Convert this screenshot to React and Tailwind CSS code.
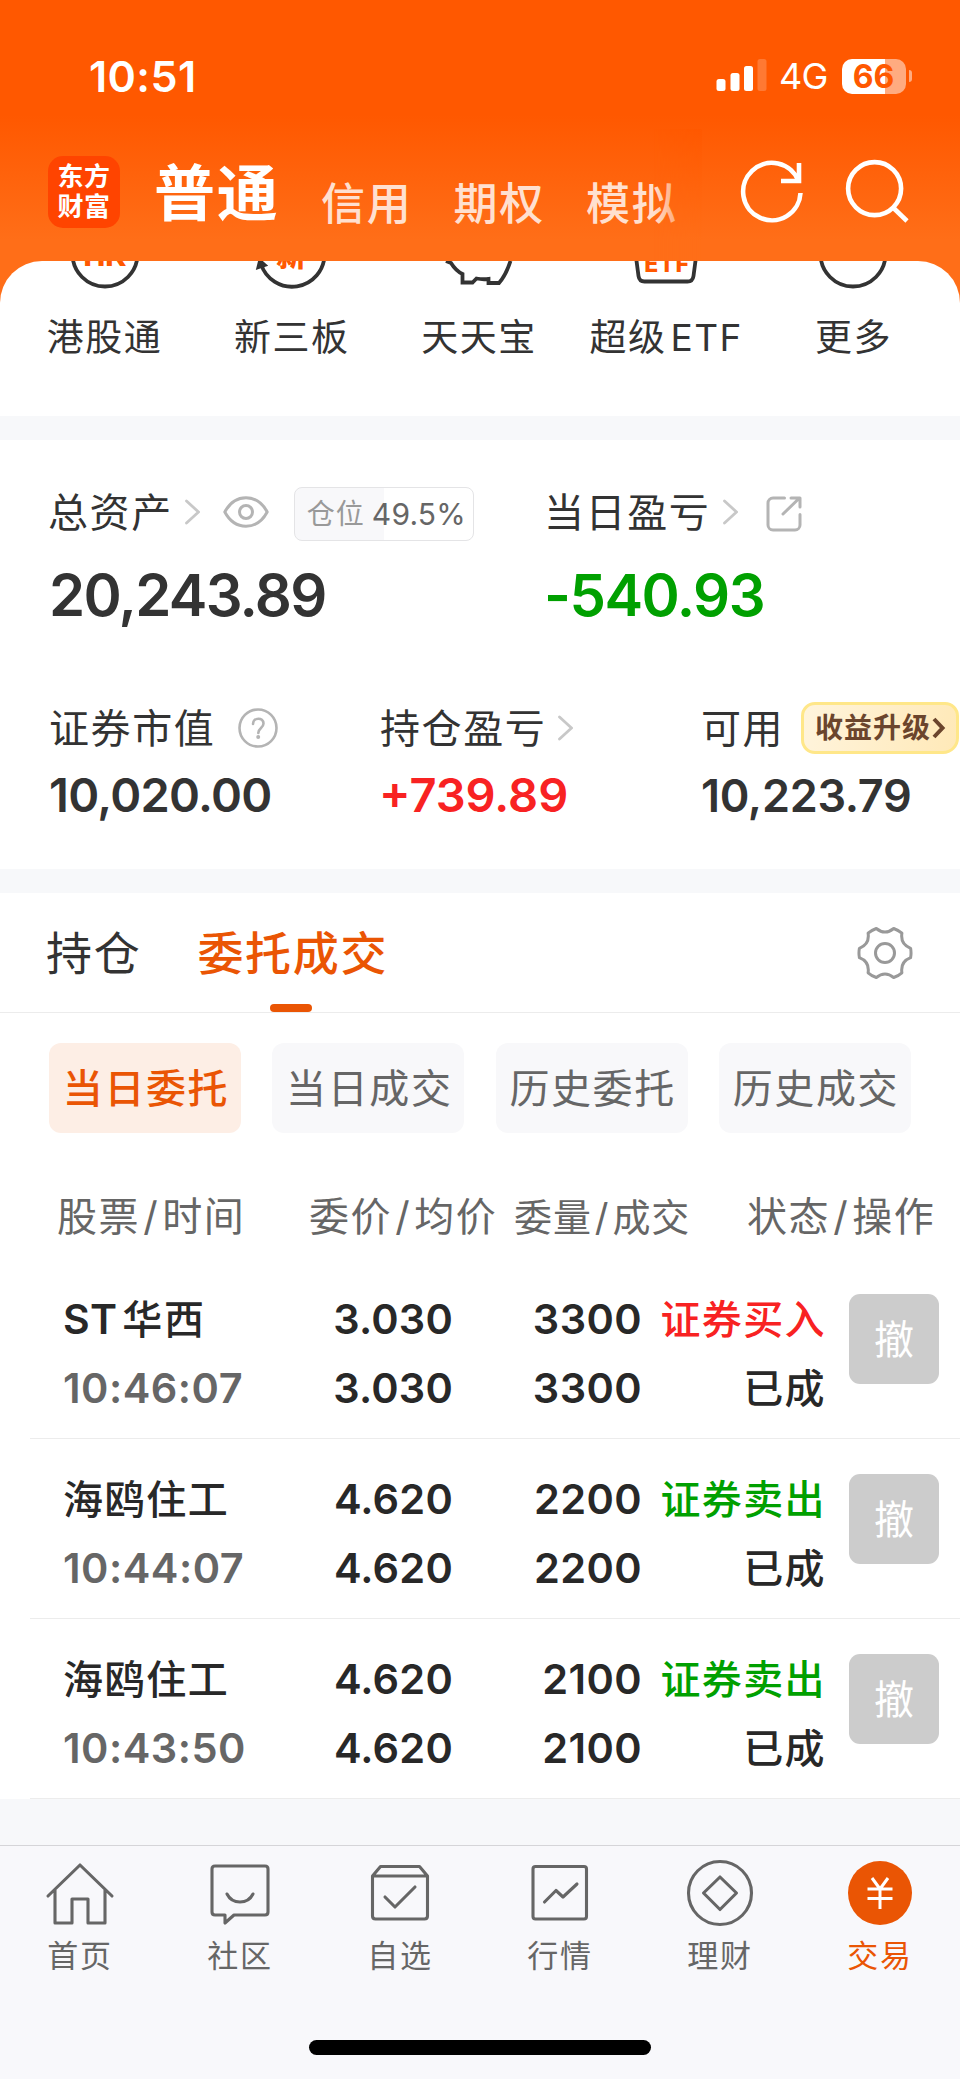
import { useState } from "react";
import clsx from "clsx";

const shortcuts = [
  { label: "港股通", icon: <HkIcon /> },
  { label: "新三板", icon: <NewBoardIcon /> },
  { label: "天天宝", icon: <PiggyIcon /> },
  { label: "超级", suffix: "ETF", icon: <EtfIcon /> },
  { label: "更多", icon: <MoreIcon /> },
];

const filters = ["当日委托", "当日成交", "历史委托", "历史成交"];

const orders = [
  { name: "ST华西", time: "10:46:07", price: "3.030", avg: "3.030", qty: "3300", deal: "3300", side: "buy" },
  { name: "海鸥住工", time: "10:44:07", price: "4.620", avg: "4.620", qty: "2200", deal: "2200", side: "sell" },
  { name: "海鸥住工", time: "10:43:50", price: "4.620", avg: "4.620", qty: "2100", deal: "2100", side: "sell" },
];

const navItems = [
  { label: "首页", icon: <HomeIcon /> },
  { label: "社区", icon: <ChatIcon /> },
  { label: "自选", icon: <BoxIcon /> },
  { label: "行情", icon: <ChartIcon /> },
  { label: "理财", icon: <DiamondIcon /> },
  { label: "交易", icon: <TradeIcon /> },
];

export default function App() {
  const [filter, setFilter] = useState("当日委托");
  const [nav, setNav] = useState("交易");

  return (
    <div className="flex h-[2079px] w-[960px] flex-col overflow-hidden bg-[#f7f8fa] font-['Inter','Noto_Sans_CJK_SC',sans-serif] text-[#333] whitespace-nowrap">
      <div className="bg-[linear-gradient(#ff5800_0px,#ff5800_115px,#ff6e18_240px)]">
        <StatusBar />
        <Header />
        <Shortcuts />
      </div>
      <Assets />

      {/* Tabs */}
      <div className="mt-6 flex h-[120px] shrink-0 justify-between border-b border-[#ececec] bg-white pl-[46px] pr-[47px]">
        <div className="flex text-[46px] leading-[121px] tracking-[1.7px]">
          <button className="mr-[56px] h-[119px]">持仓</button>
          <button className="relative h-[119px] font-medium text-[#ea5504]">
            委托成交
            <span className="absolute bottom-0 left-[73px] h-2 w-[42px] rounded-[4px] bg-[#ea5504]" />
          </button>
        </div>
        <GearIcon />
      </div>

      {/* Filters */}
      <div className="flex h-[121px] shrink-0 gap-[31.3px] bg-white pl-[49px] pt-[30px]">
        {filters.map((item) => (
          <button
            key={item}
            onClick={() => setFilter(item)}
            className={clsx(
              "h-[90px] w-[192px] rounded-xl pl-[2px] text-[40px] leading-[92px] tracking-[1.6px]",
              filter === item ? "bg-[#fdeee5] font-medium text-[#ea5504]" : "bg-[#f8f8fa] text-[#666]"
            )}
          >
            {item}
          </button>
        ))}
      </div>

      {/* Orders */}
      <div className="flex h-[125px] shrink-0 bg-white pl-[57px] pt-[43px] text-[40px] leading-[80px] tracking-[1.6px] text-[#666]">
        <span className="w-[252px]">股票<Slash />时间</span>
        <span className="w-[205px]">委价<Slash />均价</span>
        <span className="w-[233px] text-[38px] tracking-[0.9px]">委量<Slash />成交</span>
        <span>状态<Slash />操作</span>
      </div>
      {orders.map((order) => (
        <OrderRow key={order.time} order={order} />
      ))}

      {/* Bottom navigation */}
      <div className="mt-[46px] flex flex-1 flex-col border-t border-[#d5d5d8] bg-[#f8f8fb]">
        <div className="grid grid-cols-6">
          {navItems.map((item) => (
            <button
              key={item.label}
              onClick={() => setNav(item.label)}
              className={clsx(
                "flex flex-col items-center pt-[11px] text-[31px] leading-[44px] tracking-[1.8px]",
                nav === item.label ? "text-[#ea5504]" : "text-[#666]"
              )}
            >
              {item.icon}
              <span className="mt-[5px]">{item.label}</span>
            </button>
          ))}
        </div>
        <div className="mx-auto mt-[62px] h-[15px] w-[342px] rounded-full bg-black" />
      </div>
    </div>
  );
}

function Slash() {
  return <span className="mx-[3px]">/</span>;
}

function StatusBar() {
  return (
    <div className="flex h-[129px] items-start justify-between pl-[89px] pr-12 text-white">
      <span className="mt-[50px] text-[43px] font-semibold leading-[52px] tracking-[0.4px]">10:51</span>
      <div className="mt-[50px] flex h-[52px] items-center">
        <svg width="52" height="34" viewBox="0 0 52 34" fill="currentColor">
          <rect x="0.5" y="20" width="9" height="12" rx="2.5" />
          <rect x="14.5" y="14" width="9" height="18" rx="2.5" />
          <rect x="28" y="7" width="9" height="25" rx="2.5" />
          <rect x="41.5" y="0" width="9" height="32" rx="2.5" opacity="0.2" />
        </svg>
        <span className="ml-[11px] w-[51px] text-[36px] leading-[54px] tracking-[-0.8px]">4G</span>
        <div className="ml-3 flex h-[35px] w-16 items-center justify-center rounded-[10px] bg-[linear-gradient(90deg,#fff_43px,#ffab80_43px)] pr-px text-[32px] font-bold leading-[35px] text-[#ff5800]">
          66
        </div>
        <div className="ml-[3px] h-3 w-[3px] rounded-r-full bg-[#ffab80]" />
      </div>
    </div>
  );
}

function Header() {
  return (
    <div className="flex h-[132px] items-start pl-12">
      <div className="mt-[27px] flex h-[72px] w-[72px] flex-col items-center justify-center rounded-[15px] bg-[#ff4400] text-[26px] font-bold leading-[30px] tracking-[0.5px] text-white">
        <span>东方</span>
        <span>财富</span>
      </div>
      <div className="relative flex h-full w-[582px] text-[44px] font-medium tracking-[1.8px] text-[#ffe0d0]">
        <span className="ml-[34px] mt-[25px] w-[167px] text-[61px] font-bold leading-[80px] text-white">普通</span>
        <span className="mt-[35px] w-[132.5px] leading-[80px]">信用</span>
        <span className="mt-[35px] w-[132.5px] leading-[80px]">期权</span>
        <span className="mt-[35px] leading-[80px]">模拟</span>
        <div className="absolute right-0 top-0 h-full w-[48px] bg-[linear-gradient(#ff5800,#ff6e18_112px)] [mask-image:linear-gradient(90deg,transparent,black)]" />
      </div>
      <svg className="mt-[27px]" width="210" height="72" viewBox="702 156 210 72" fill="none" stroke="#fff" strokeWidth="4.6">
        <path d="M800.500 193A28.700 28.700 0 1 1 798.500 181" />
        <path d="M799 163v18h-18" />
        <circle cx="874.600" cy="188.600" r="26.500" />
        <path d="M893 207.500l14 13.500" />
      </svg>
    </div>
  );
}

function Shortcuts() {
  return (
    <div className="grid h-[155px] grid-cols-5 overflow-hidden rounded-t-[42px] bg-white pl-[11px] pr-[13px]">
      {shortcuts.map((item) => (
        <div key={item.label} className="flex flex-col items-center">
          {item.icon}
          <span className="mt-[11px] text-[37px] leading-[52px] tracking-[1.5px]">
            {item.label}
            {item.suffix && <span className="ml-1">{item.suffix}</span>}
          </span>
        </div>
      ))}
    </div>
  );
}

function Assets() {
  return (
    <div className="mt-6 h-[429px] shrink-0 bg-white pl-[49px] text-[40px] tracking-[1.6px]">
      <div className="flex pt-[42px]">
        <div className="w-[497px]">
          <div className="flex h-[60px] items-center leading-[60px]">
            <span className="-ml-px mr-[12px] mt-[2px]">总资产</span>
            <Chevron />
            <svg className="ml-[23px]" width="46" height="32" viewBox="0 0 46 32" fill="none" stroke="#b4b4b4" strokeWidth="3">
              <path d="M1.800 16C12-3 34-3 44.200 16 34 35 12 35 1.800 16z" strokeLinejoin="round" />
              <circle cx="23" cy="16" r="6.500" />
            </svg>
            <div className="ml-[25px] mt-[3px] flex h-[54px] w-[180px] items-center rounded-lg border border-[#e4e4e6] bg-[linear-gradient(90deg,#f8f8fa_89px,#fff_89px)] pl-3 text-[28px] tracking-[1px] text-[#999]">
              仓位
              <span className="ml-[7px] text-[30px] tracking-[0.2px] text-[#666]">49.5%</span>
            </div>
          </div>
          <div className="mt-[13px] text-[58px] font-semibold leading-[80px] tracking-[-1.7px]">20,243.89</div>
        </div>
        <div>
          <div className="flex h-[60px] items-center leading-[60px]">
            <span className="-ml-[2px] mr-[13px] mt-[2px]">当日盈亏</span>
            <Chevron />
            <svg className="ml-[27px] mt-[3px]" width="38" height="38" viewBox="0 0 38 38" fill="none" stroke="#b4b4b4" strokeWidth="3" strokeLinecap="round" strokeLinejoin="round">
              <path d="M19.500 3H8a5 5 0 0 0-5 5v22a5 5 0 0 0 5 5h22a5 5 0 0 0 5-5V19.500" />
              <path d="M18 19L34.500 3M26 3h9v9" />
            </svg>
          </div>
          <div className="-ml-[2px] mt-[13px] text-[58px] font-semibold leading-[80px] tracking-[-1.5px] text-[#00a000]">-540.93</div>
        </div>
      </div>

      <div className="mt-[63px] flex">
        <div className="w-[332px]">
          <div className="flex h-[60px] items-center">
            <span className="mr-[22px] mt-[2px]">证券市值</span>
            <svg width="42" height="42" viewBox="0 0 42 42" fill="none" stroke="#b4b4b4" strokeWidth="2.6">
              <circle cx="21" cy="21" r="18.500" />
              <path d="M16 17c0-7 10.500-7 10.500-.5 0 4.500-5.200 4.500-5.200 9.500" strokeLinecap="round" />
              <circle cx="21.200" cy="30" r="2" fill="#b4b4b4" stroke="none" />
            </svg>
          </div>
          <div className="mt-[7px] text-[47px] font-semibold leading-[60px] tracking-[-0.7px]">10,020.00</div>
        </div>
        <div className="w-[320px]">
          <div className="flex h-[60px] items-center">
            <span className="-ml-px mr-[12px] mt-[2px]">持仓盈亏</span>
            <Chevron />
          </div>
          <div className="-ml-[2px] mt-[7px] text-[47px] font-semibold leading-[60px] tracking-[0px] text-[#f82222]">+739.89</div>
        </div>
        <div>
          <div className="flex h-[60px] items-center">
            <span className="mt-[2px] w-[100px]">可用</span>
            <div className="flex h-[52px] w-[158px] items-center rounded-[14px_14px_16px_14px] border-[3px] border-[#ffe789] bg-[linear-gradient(100deg,#fff4dc,#ffe9b8)] pl-[11px] text-[28px] font-bold tracking-[1px] text-[#6b452d]">
              收益升级
              <svg className="ml-px" width="14" height="22" viewBox="0 0 14 22" fill="none" stroke="currentColor" strokeWidth="4">
                <path d="M2 2l8.500 9L2 20" />
              </svg>
            </div>
          </div>
          <div className="mt-[8px] text-[45px] font-semibold leading-[60px] tracking-[-0.3px]">10,223.79</div>
        </div>
      </div>
    </div>
  );
}

function OrderRow({ order }) {
  return (
    <div className="h-[180px] shrink-0 bg-white pl-[30px]">
      <div className="flex h-full border-b border-[#ececec] pl-[33px] pt-[26px] text-[41.500px] font-semibold leading-[69px] text-[#282828]">
        <div className="w-[207px]">
          <div className="text-[40px] font-medium tracking-[1.6px]">
            {order.name.startsWith("ST") ? (
              <>
                <span className="mr-[5px] text-[41px] font-semibold tracking-[0.3px]">ST</span>
                {order.name.slice(2)}
              </>
            ) : (
              order.name
            )}
          </div>
          <div className="tracking-[0.5px] text-[#666]">{order.time}</div>
        </div>
        <div className="w-[183px] text-right tracking-[0.2px]">
          <div>{order.price}</div>
          <div>{order.avg}</div>
        </div>
        <div className="w-[189px] text-right tracking-[0.4px]">
          <div>{order.qty}</div>
          <div>{order.deal}</div>
        </div>
        <div className="w-[184px] text-right text-[40px] font-medium tracking-[1.4px]">
          <div className={order.side === "buy" ? "text-[#f82222]" : "text-[#00a000]"}>
            {order.side === "buy" ? "证券买入" : "证券卖出"}
          </div>
          <div>已成</div>
        </div>
        <button className="ml-[23px] mt-[9px] h-[90px] w-[90px] rounded-[11px] bg-[#ccc] text-[40px] font-normal leading-[92px] text-white">
          撤
        </button>
      </div>
    </div>
  );
}

/* Icons */
function Chevron() {
  return (
    <svg width="15" height="26" viewBox="0 0 15 26" fill="none" stroke="#c8c8c8" strokeWidth="2.800" strokeLinecap="round">
      <path d="M1.500 2L13.500 13 1.500 24" />
    </svg>
  );
}

function GearIcon() {
  return (
    <svg className="mt-[32px]" width="56" height="56" viewBox="-28 -28 56 56" fill="none" stroke="#999" strokeWidth="3" strokeLinejoin="round">
      <path d="M-8.700-24.500Q0-17.500 8.700-24.500Q13.500-22.800 16.900-19.800Q15.200-8.800 25.600-4.700Q26.500 0 25.600 4.700Q15.200 8.800 16.900 19.800Q13.500 22.800 8.700 24.500Q0 17.500-8.700 24.500Q-13.500 22.800-16.900 19.800Q-15.200 8.800-25.600 4.700Q-26.500 0-25.600-4.700Q-15.200-8.800-16.900-19.800Q-13.500-22.800-8.700-24.500z" />
      <circle r="9.500" />
    </svg>
  );
}

function ShortcutSvg({ children }) {
  return (
    <svg className="h-10 w-20" viewBox="-40 0 80 40" fill="none" stroke="#333" strokeWidth="3.800">
      {children}
    </svg>
  );
}

function HkIcon() {
  return (
    <ShortcutSvg>
      <circle cy="-7" r="32.500" />
      <text y="5" textAnchor="middle" fontSize="29" fontWeight="800" fill="#ff5800" stroke="none">HK</text>
    </ShortcutSvg>
  );
}

function NewBoardIcon() {
  return (
    <ShortcutSvg>
      <path d="M-31 3A32.500 32.500 0 0 0 32.500-7" />
      <path d="M-32 0l-1.500 6 6-2z" fill="#333" />
      <text x="-1" y="5" textAnchor="middle" fontSize="30" fontWeight="800" fill="#ff5800" stroke="none">新</text>
    </ShortcutSvg>
  );
}

function PiggyIcon() {
  return (
    <ShortcutSvg>
      <path d="M-33 0l5 2q5 8 11.500 11v8.500h10l4-4q6 1.200 12 .5v4h10.500Q27 14 31.500 0" />
    </ShortcutSvg>
  );
}

function EtfIcon() {
  return (
    <ShortcutSvg>
      <path d="M-30-4l2.500 19q.8 5.500 6 5.500h43q5.200 0 6-5.500L30-4" />
      <text x="1" y="11" textAnchor="middle" fontSize="23" fontWeight="800" letterSpacing="0.8" fill="#ff5800" stroke="none">ETF</text>
    </ShortcutSvg>
  );
}

function MoreIcon() {
  return (
    <ShortcutSvg>
      <circle cy="-7" r="32.500" />
    </ShortcutSvg>
  );
}

function NavSvg({ children }) {
  return (
    <svg width="72" height="72" viewBox="-36 0 72 72" fill="none" stroke="currentColor" strokeWidth="3.100" strokeLinecap="round" strokeLinejoin="round">
      {children}
    </svg>
  );
}

function HomeIcon() {
  return (
    <NavSvg>
      <path d="M-32 39L0 8l32 31M-25 33v33H-8V42H8v24h17V33" />
    </NavSvg>
  );
}

function ChatIcon() {
  return (
    <NavSvg>
      <path d="M-25 9h50q3 0 3 3v43q0 3-3 3H-6l-9 8v-8h-10q-3 0-3-3V12q0-3 3-3z" />
      <path d="M-13 37q4 8 13 8t13-8" />
    </NavSvg>
  );
}

function BoxIcon() {
  return (
    <NavSvg>
      <path d="M-27.500 19l8-9.500h39l8 9.500v40q0 3-3 3h-49q-3 0-3-3zM-27 19h54" />
      <path d="M-15 40l10 10 20-20" />
    </NavSvg>
  );
}

function ChartIcon() {
  return (
    <NavSvg>
      <rect x="-27" y="9.500" width="53.500" height="52.500" rx="2.500" />
      <path d="M-15.500 45L-4 33.500l7 6.500 14-13" />
    </NavSvg>
  );
}

function DiamondIcon() {
  return (
    <NavSvg>
      <circle cy="36" r="31.500" />
      <path d="M0 20l16.500 16L0 52.500-16.500 36z" />
    </NavSvg>
  );
}

function TradeIcon() {
  return (
    <NavSvg>
      <circle cy="36" r="32" fill="#ea5504" stroke="none" />
      <path d="M-8 21l8 11 8-11M0 32v20M-12.500 32h25M-12.500 41.500h25" stroke="#fff" strokeLinecap="butt" strokeWidth="3" />
    </NavSvg>
  );
}
